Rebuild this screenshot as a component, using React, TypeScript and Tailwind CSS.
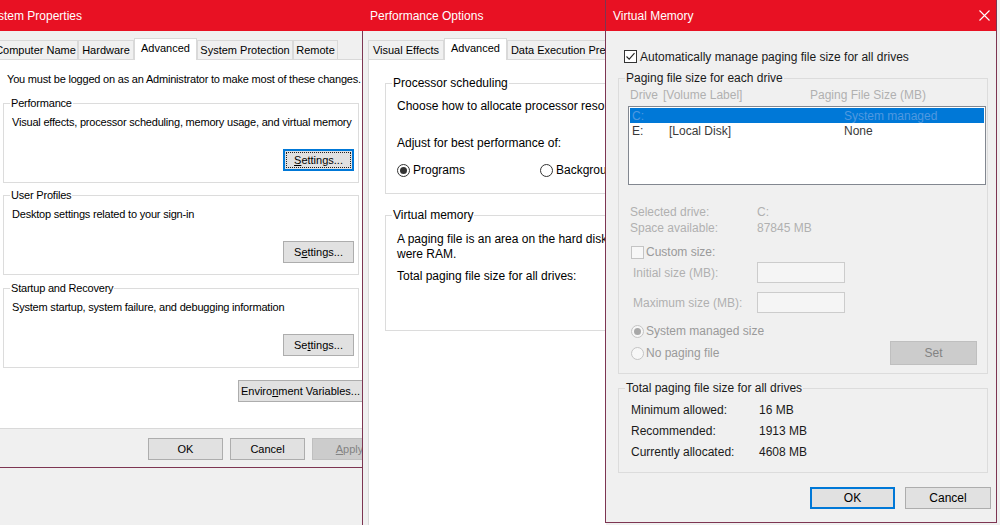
import React from "react"

const sans = "font-['Liberation_Sans',Arial,sans-serif]"

function Btn({
  children,
  className = "",
  focused = false,
  disabled = false,
  dotted = false,
}: {
  children: React.ReactNode
  className?: string
  focused?: boolean
  disabled?: boolean
  dotted?: boolean
}) {
  const tone = disabled
    ? "bg-[#cccccc] border-[#bfbfbf] text-[#838383]"
    : focused
      ? "bg-[#e1e1e1] border-[#0078d7] shadow-[inset_0_0_0_1px_#0078d7] text-black"
      : "bg-[#e1e1e1] border-[#adadad] text-black"
  return (
    <div className={`relative shrink-0 flex items-center justify-center border whitespace-nowrap ${tone} ${className}`}>
      {dotted && <div className="absolute inset-[2px] border border-dotted border-[#222]" />}
      <span className="relative">{children}</span>
    </div>
  )
}

function Tab({ children, className = "", active = false }: { children: React.ReactNode; className?: string; active?: boolean }) {
  return (
    <div
      className={`shrink-0 flex items-center justify-center border border-b-0 border-[#d9d9d9] whitespace-nowrap overflow-hidden ${
        active ? "h-[22px] -mb-px bg-white pb-[2px]" : "h-[19px] bg-[#f0f0f0]"
      } ${className}`}
    >
      {children}
    </div>
  )
}

function Check({ checked = false, disabled = false }: { checked?: boolean; disabled?: boolean }) {
  return (
    <div
      className={`shrink-0 w-[13px] h-[13px] border flex items-center justify-center ${
        disabled ? "border-[#c4c4c4] bg-[#f7f7f7]" : "border-[#333333] bg-white"
      }`}
    >
      {checked && (
        <svg width="11" height="11" viewBox="0 0 11 11">
          <path d="M1.5 5.5 L4.2 8.2 L9.5 2.2" fill="none" stroke="#222" strokeWidth="1.1" />
        </svg>
      )}
    </div>
  )
}

function Radio({ checked = false, disabled = false }: { checked?: boolean; disabled?: boolean }) {
  return (
    <div
      className={`shrink-0 w-[13px] h-[13px] rounded-full border flex items-center justify-center ${
        disabled ? "border-[#c4c4c4] bg-[#f7f7f7]" : "border-[#333333] bg-white"
      }`}
    >
      {checked && <div className={`w-[7px] h-[7px] rounded-full ${disabled ? "bg-[#a8a8a8]" : "bg-[#333333]"}`} />}
    </div>
  )
}

function SPGroup({
  label,
  text,
  btn,
  className = "",
  focused = false,
}: {
  label: string
  text: string
  btn: React.ReactNode
  className?: string
  focused?: boolean
}) {
  return (
    <div className={`relative ml-[12px] w-[356px] shrink-0 flex flex-col border border-[#dcdcdc] pt-[12px] pb-[11px] ${className}`}>
      <span className="absolute left-[6px] top-[-7px] px-px bg-white">{label}</span>
      <p className="h-[13px] pl-[8px] whitespace-nowrap">{text}</p>
      <div className="flex justify-end pr-[4px] mt-[20px] tracking-normal">
        <Btn className="w-[71px] h-[22px]" focused={focused} dotted={focused}>
          {btn}
        </Btn>
      </div>
    </div>
  )
}

function SystemProperties() {
  return (
    <div
      className={`absolute z-[1] left-[-15px] top-0 w-[420px] h-[468px] flex flex-col bg-[#f0f0f0] border-x border-b border-[#7d3552] ${sans}`}
    >
      <div className="h-[31px] shrink-0 flex items-center bg-[#e81123] text-white text-[12px]">
        <span className="-ml-[2px] whitespace-nowrap">System Properties</span>
      </div>
      <div className="relative z-10 flex items-end h-[21px] mt-[7px] pl-[7px] text-[11px] text-black">
        <Tab className="w-[85px]">Computer Name</Tab>
        <Tab className="w-[56px]">Hardware</Tab>
        <Tab className="w-[63px]" active>
          Advanced
        </Tab>
        <Tab className="w-[96px]">System Protection</Tab>
        <Tab className="w-[45px]">Remote</Tab>
      </div>
      <div className="mx-[4px] h-[370px] shrink-0 flex flex-col bg-white border border-[#d9d9d9] text-[11px] leading-[13px] tracking-[-0.2px] text-black">
        <p className="mt-[13px] pl-[16px] whitespace-nowrap">
          You must be logged on as an Administrator to make most of these changes.
        </p>
        <SPGroup
          label="Performance"
          text="Visual effects, processor scheduling, memory usage, and virtual memory"
          btn={
            <>
              <u>S</u>ettings...
            </>
          }
          className="mt-[17px]"
          focused
        />
        <SPGroup
          label="User Profiles"
          text="Desktop settings related to your sign-in"
          btn={
            <>
              S<u>e</u>ttings...
            </>
          }
          className="mt-[12px]"
        />
        <SPGroup
          label="Startup and Recovery"
          text="System startup, system failure, and debugging information"
          btn={
            <>
              Se<u>t</u>tings...
            </>
          }
          className="mt-[13px]"
        />
        <div className="mt-[12px] pl-[247px] tracking-normal">
          <Btn className="w-[125px] h-[22px]">
            Enviro<u>n</u>ment Variables...
          </Btn>
        </div>
      </div>
      <div className="flex gap-[7px] mt-[9px] pl-[162px] text-[11px]">
        <Btn className="w-[75px] h-[22px]">OK</Btn>
        <Btn className="w-[75px] h-[22px]">Cancel</Btn>
        <Btn className="w-[75px] h-[22px]" disabled>
          <u>A</u>pply
        </Btn>
      </div>
    </div>
  )
}

function PerformanceOptions() {
  return (
    <div className={`absolute z-[2] left-[362px] top-0 w-[244px] h-[540px] overflow-hidden flex flex-col ${sans}`}>
      <div className="h-[31px] shrink-0 flex items-center pl-[8px] bg-[#e81123] text-white text-[12px]">Performance Options</div>
      <div className="flex-1 flex flex-col bg-[#f0f0f0] border-l border-[#7d3552] pl-[5px]">
        <div className="relative z-10 flex items-end h-[21px] mt-[7px] text-[11px] text-black">
          <Tab className="w-[76px]">Visual Effects</Tab>
          <Tab className="w-[63px]" active>
            Advanced
          </Tab>
          <Tab className="w-[138px]">Data Execution Prevention</Tab>
        </div>
        <div className="flex-1 w-[420px] flex flex-col bg-white border border-[#d9d9d9] text-[12px] leading-[15px] text-black">
          <div className="relative ml-[16px] mt-[23px] w-[380px] flex flex-col border border-[#dcdcdc] pl-[11px] pt-[15px] pb-[15px]">
            <span className="absolute left-[6px] top-[-8px] px-px bg-white">Processor scheduling</span>
            <p className="whitespace-nowrap">Choose how to allocate processor resources.</p>
            <p className="mt-[22px] whitespace-nowrap">Adjust for best performance of:</p>
            <div className="flex items-center h-[15px] mt-[12px]">
              <div className="flex items-center w-[143px]">
                <Radio checked />
                <span className="ml-[3px]">Programs</span>
              </div>
              <div className="flex items-center">
                <Radio />
                <span className="ml-[3px]">Background services</span>
              </div>
            </div>
          </div>
          <div className="relative ml-[16px] mt-[21px] w-[380px] flex flex-col border border-[#dcdcdc] pl-[11px] pt-[16px] pb-[46px]">
            <span className="absolute left-[6px] top-[-8px] px-px bg-white">Virtual memory</span>
            <p className="whitespace-nowrap">A paging file is an area on the hard disk that Windows uses as if it</p>
            <p className="whitespace-nowrap">were RAM.</p>
            <p className="mt-[7px] whitespace-nowrap">Total paging file size for all drives:</p>
          </div>
        </div>
      </div>
    </div>
  )
}

function VirtualMemory() {
  const faint = "text-[#b0b0b0]"
  const dim = "text-[#9a9a9a]"
  return (
    <div
      className={`absolute z-[3] left-[605px] top-0 w-[392px] h-[523px] flex flex-col bg-[#f0f0f0] border-x border-b border-[#7d3552] text-[12px] leading-[14px] text-[#1a1a1a] ${sans}`}
    >
      <div className="h-[31px] shrink-0 flex items-center justify-between pl-[7px] pr-[6px] bg-[#e81123] text-white">
        <span>Virtual Memory</span>
        <svg width="11" height="11" viewBox="0 0 11 11">
          <path d="M0.5 0.5 L10.5 10.5 M10.5 0.5 L0.5 10.5" stroke="#ffffff" strokeWidth="1.1" />
        </svg>
      </div>

      <div className="flex items-center h-[13px] mt-[19px] ml-[18px]">
        <Check checked />
        <span className="ml-[3px] whitespace-nowrap">Automatically manage paging file size for all drives</span>
      </div>

      <div className="relative ml-[12px] mt-[15px] w-[370px] flex flex-col border border-[#dcdcdc] pb-[8px]">
        <span className="absolute left-[6px] top-[-8px] px-px bg-[#f0f0f0]">Paging file size for each drive</span>
        <div className={`flex h-[14px] mt-[9px] pl-[11px] ${faint}`}>
          <div className="w-[180px] flex">
            <span>Drive</span>
            <span className="ml-[5px]">[Volume Label]</span>
          </div>
          <span>Paging File Size (MB)</span>
        </div>
        <div className="ml-[9px] mt-[4px] w-[358px] h-[79px] p-px bg-white border border-[#828790]">
          <div className="flex items-center h-[15px] pl-[2px] bg-[#0078d7] text-[#4f98e0]">
            <span className="w-[37px]">C:</span>
            <span className="w-[175px]" />
            <span>System managed</span>
          </div>
          <div className="flex items-center h-[15px] pl-[2px] text-[#3a3a3a]">
            <span className="w-[37px]">E:</span>
            <span className="w-[175px]">[Local Disk]</span>
            <span>None</span>
          </div>
        </div>
        <div className={`flex items-center h-[16px] mt-[19px] pl-[11px] ${faint}`}>
          <span className="w-[127px]">Selected drive:</span>
          <span>C:</span>
        </div>
        <div className={`flex items-center h-[16px] pl-[11px] ${faint}`}>
          <span className="w-[127px]">Space available:</span>
          <span>87845 MB</span>
        </div>
        <div className={`flex items-center h-[14px] mt-[9px] pl-[12px] ${dim}`}>
          <Check disabled />
          <span className="ml-[2px]">Custom size:</span>
        </div>
        <div className={`flex items-center h-[21px] mt-[3px] pl-[14px] ${faint}`}>
          <span className="w-[124px]">Initial size (MB):</span>
          <div className="w-[88px] h-[21px] bg-[#f5f5f5] border border-[#cccccc]" />
        </div>
        <div className={`flex items-center h-[21px] mt-[9px] pl-[14px] ${faint}`}>
          <span className="w-[124px]">Maximum size (MB):</span>
          <div className="w-[88px] h-[21px] bg-[#f5f5f5] border border-[#cccccc]" />
        </div>
        <div className={`flex items-center h-[14px] mt-[11px] pl-[12px] ${dim}`}>
          <Radio checked disabled />
          <span className="ml-[2px]">System managed size</span>
        </div>
        <div className={`flex items-center h-[24px] mt-[3px] pl-[12px] pr-[10px] ${dim}`}>
          <Radio disabled />
          <span className="ml-[2px]">No paging file</span>
          <Btn className="ml-auto w-[87px] h-[24px]" disabled>
            Set
          </Btn>
        </div>
      </div>

      <div className="relative ml-[12px] mt-[14px] w-[370px] flex flex-col border border-[#dcdcdc] pt-[10px] pb-[10px] pl-[12px]">
        <span className="absolute left-[6px] top-[-8px] px-px bg-[#f0f0f0]">Total paging file size for all drives</span>
        <div className="flex items-center h-[21px]">
          <span className="w-[128px]">Minimum allowed:</span>
          <span>16 MB</span>
        </div>
        <div className="flex items-center h-[21px]">
          <span className="w-[128px]">Recommended:</span>
          <span>1913 MB</span>
        </div>
        <div className="flex items-center h-[21px]">
          <span className="w-[128px]">Currently allocated:</span>
          <span>4608 MB</span>
        </div>
      </div>

      <div className="flex justify-end gap-[10px] mt-[14px] pr-[5px]">
        <Btn className="w-[85px] h-[22px]" focused>
          OK
        </Btn>
        <Btn className="w-[86px] h-[22px]">Cancel</Btn>
      </div>
    </div>
  )
}

export default function App() {
  return (
    <div className="relative w-[1000px] h-[525px] overflow-hidden bg-[#f0f0f0]">
      <SystemProperties />
      <PerformanceOptions />
      <VirtualMemory />
    </div>
  )
}
